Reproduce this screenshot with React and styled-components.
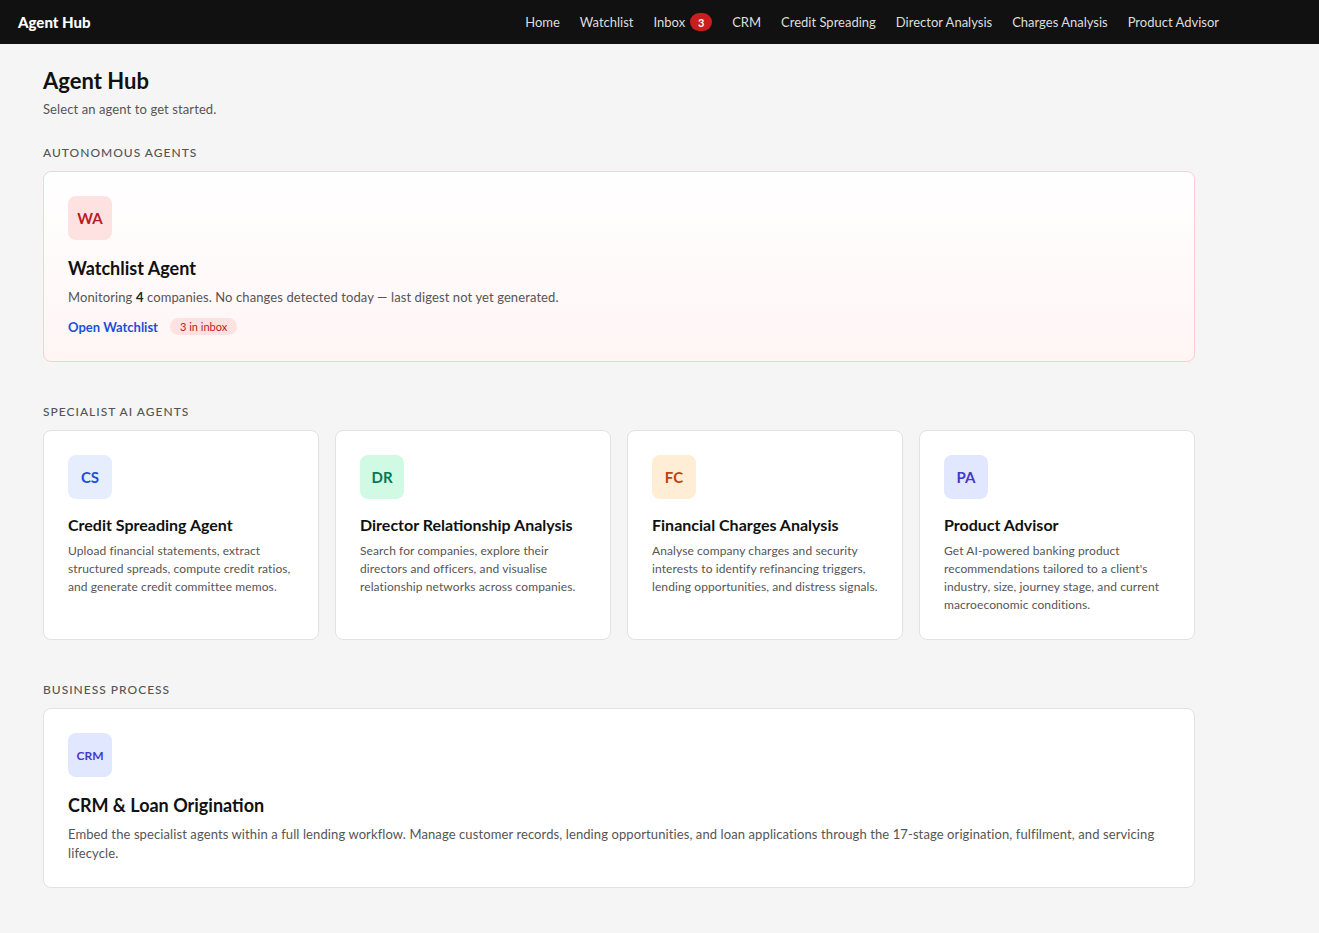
import styled, { createGlobalStyle } from "styled-components"

const GlobalStyle = createGlobalStyle`
    *{
        box-sizing: border-box;
    }
    body{
        margin: 0;
        background: #f5f5f5;
        font-family: 'Lato', 'Noto Sans', sans-serif;
        color: #111;
    }
    h1, h2, h3, p{
        margin: 0;
    }
`

const specialists = [
    {
        code: "CS",
        tone: "blue",
        title: "Credit Spreading Agent",
        text: "Upload financial statements, extract structured spreads, compute credit ratios, and generate credit committee memos.",
    },
    {
        code: "DR",
        tone: "green",
        title: "Director Relationship Analysis",
        text: "Search for companies, explore their directors and officers, and visualise relationship networks across companies.",
    },
    {
        code: "FC",
        tone: "orange",
        title: "Financial Charges Analysis",
        text: "Analyse company charges and security interests to identify refinancing triggers, lending opportunities, and distress signals.",
    },
    {
        code: "PA",
        tone: "indigo",
        title: "Product Advisor",
        text: "Get AI-powered banking product recommendations tailored to a client's industry, size, journey stage, and current macroeconomic conditions.",
    },
]

const tones = {
    red: { bg: "#fee2e2", fg: "#b91c1c" },
    blue: { bg: "#e6eefd", fg: "#1d4ed8" },
    green: { bg: "#d1fae5", fg: "#047857" },
    orange: { bg: "#ffedd5", fg: "#c2410c" },
    indigo: { bg: "#e0e7ff", fg: "#4338ca" },
}

export default function App(){
    return(
        <>
            <GlobalStyle />
            <TopBar>
                <Brand>Agent Hub</Brand>
                <Links>
                    <NavLink>Home</NavLink>
                    <NavLink>Watchlist</NavLink>
                    <NavLink>Inbox <Count>3</Count></NavLink>
                    <NavLink>CRM</NavLink>
                    <NavLink>Credit Spreading</NavLink>
                    <NavLink>Director Analysis</NavLink>
                    <NavLink>Charges Analysis</NavLink>
                    <NavLink>Product Advisor</NavLink>
                </Links>
            </TopBar>
            <Main>
                <PageTitle>Agent Hub</PageTitle>
                <Subtitle>Select an agent to get started.</Subtitle>

                <SectionLabel>Autonomous Agents</SectionLabel>
                <Card $alert $large>
                    <Avatar $tone="red">WA</Avatar>
                    <CardTitle $large>Watchlist Agent</CardTitle>
                    <CardText $large>Monitoring <b>4</b> companies. No changes detected today — last digest not yet generated.</CardText>
                    <Actions>
                        <ActionLink>Open Watchlist</ActionLink>
                        <Pill>3 in inbox</Pill>
                    </Actions>
                </Card>

                <SectionLabel>Specialist AI Agents</SectionLabel>
                <Grid>
                    {specialists.map((s) => (
                        <Card key={s.code}>
                            <Avatar $tone={s.tone}>{s.code}</Avatar>
                            <CardTitle>{s.title}</CardTitle>
                            <CardText>{s.text}</CardText>
                        </Card>
                    ))}
                </Grid>

                <SectionLabel>Business Process</SectionLabel>
                <Card $large>
                    <Avatar $tone="indigo" $small>CRM</Avatar>
                    <CardTitle $large>CRM &amp; Loan Origination</CardTitle>
                    <CardText $large>Embed the specialist agents within a full lending workflow. Manage customer records, lending opportunities, and loan applications through the 17-stage origination, fulfilment, and servicing lifecycle.</CardText>
                </Card>
            </Main>
        </>
    )
}

const TopBar = styled.header`
    height: 44px;
    background: #111111;
    display: flex;
    align-items: center;
    justify-content: space-between;
    padding: 0 100px 0 18px;
`
const Brand = styled.div`
    color: #ffffff;
    font-weight: 900;
    font-size: 15px;
`
const Links = styled.nav`
    display: flex;
    align-items: center;
    gap: 20px;
`
const NavLink = styled.a`
    display: flex;
    align-items: center;
    gap: 5px;
    color: #dddddd;
    font-size: 13px;
    cursor: pointer;
`
const Count = styled.span`
    display: inline-flex;
    align-items: center;
    justify-content: center;
    min-width: 22px;
    height: 18px;
    padding: 0 6px;
    border-radius: 9px;
    background: #c81e1e;
    color: #ffffff;
    font-size: 11px;
    font-weight: 700;
`
const Main = styled.main`
    max-width: 1195px;
    padding: 23px 0 44px 43px;
`
const PageTitle = styled.h1`
    font-size: 22px;
    font-weight: 700;
    line-height: 28px;
`
const Subtitle = styled.p`
    margin-top: 6px;
    font-size: 13px;
    letter-spacing: 0.1px;
    color: #555;
`
const SectionLabel = styled.h2`
    margin: 28px 0 11px;
    font-size: 12px;
    font-weight: 500;
    letter-spacing: 1px;
    text-transform: uppercase;
    color: #555;
`
const Grid = styled.div`
    display: grid;
    grid-template-columns: repeat(4, 1fr);
    gap: 16px;
    margin-bottom: 42px;
`
const Card = styled.div`
    display: flex;
    flex-direction: column;
    padding: ${(p) => (p.$alert ? "24px 24px 26px" : "24px")};
    border-radius: 8px;
    border: 1px solid ${(p) => (p.$alert ? "#fbcfcf" : "#e2e2e2")};
    background: ${(p) => (p.$alert ? "linear-gradient(180deg, #ffffff 0%, #fff5f5 100%)" : "#ffffff")};
    min-height: ${(p) => (p.$large ? "0" : "210px")};
    margin-bottom: ${(p) => (p.$large ? "42px" : "0")};
`
const Avatar = styled.div`
    width: 44px;
    height: 44px;
    border-radius: 8px;
    display: flex;
    align-items: center;
    justify-content: center;
    background: ${(p) => tones[p.$tone].bg};
    color: ${(p) => tones[p.$tone].fg};
    font-size: ${(p) => (p.$small ? "12px" : "15px")};
    font-weight: 700;
`
const CardTitle = styled.h3`
    margin-top: ${(p) => (p.$large ? "16px" : "15px")};
    font-size: ${(p) => (p.$large ? "18px" : "16px")};
    font-weight: 700;
    line-height: 1.4;
`
const CardText = styled.p`
    margin-top: ${(p) => (p.$large ? "7px" : "5px")};
    font-size: ${(p) => (p.$large ? "13px" : "12px")};
    line-height: ${(p) => (p.$large ? "19px" : "18px")};
    letter-spacing: 0.1px;
    color: #555;
    b{
        color: #222;
    }
`
const Actions = styled.div`
    display: flex;
    align-items: center;
    gap: 12px;
    margin-top: 11px;
`
const ActionLink = styled.a`
    color: #1d4ed8;
    font-size: 13px;
    font-weight: 700;
    cursor: pointer;
`
const Pill = styled.span`
    padding: 2px 10px;
    border-radius: 10px;
    background: #fee2e2;
    color: #b91c1c;
    font-size: 11px;
`
